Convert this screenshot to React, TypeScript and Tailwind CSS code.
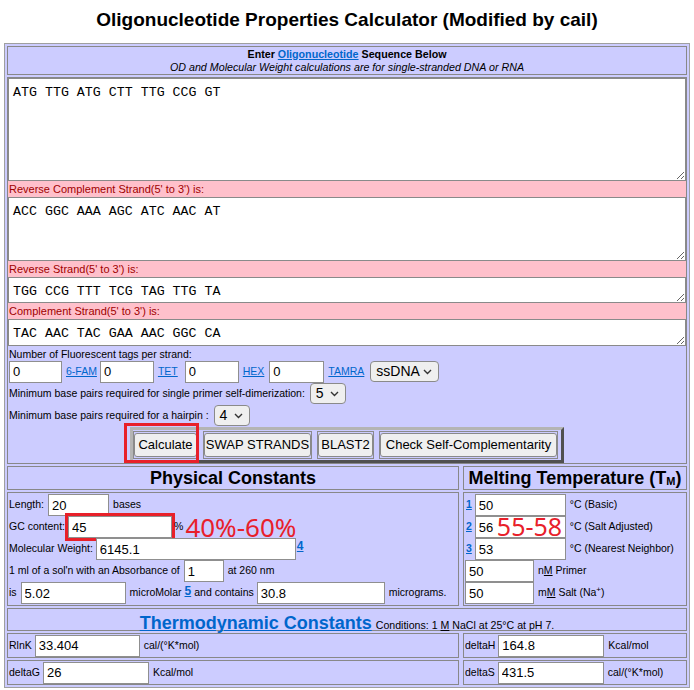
import React from "react"

const inputCls = "h-[22px] shrink-0 border border-[#8f8f8f] bg-white px-[3px] text-[13px] leading-[20px] text-black"
const linkCls = "text-[#0066cc] underline"
const rowCls = "flex h-[22px] items-center whitespace-nowrap"

function Strand({ h, value }: { h: string; value: string }) {
  return (
    <textarea
      className={`${h} w-full border border-[#8a8a8a] bg-white pl-[4px] pt-[5px] font-['Liberation_Mono',monospace] text-[13.3px] leading-[18px] text-black`}
      defaultValue={value}
    />
  )
}

function StrandLabel({ children }: { children: React.ReactNode }) {
  return <div className="h-[16px] bg-[#ffc0cb] pl-[1px] text-[11px] leading-[16px] text-[#a00000]">{children}</div>
}

function Select({ value, w }: { value: string; w: string }) {
  return (
    <div className={`${w} flex h-[21px] items-center justify-between rounded-[4px] border border-[#8a8a8a] bg-[#efefef] pl-[5px] pr-[6px] text-[14px]`}>
      <span>{value}</span>
      <svg width="9" height="6" viewBox="0 0 9 6" fill="none">
        <path d="M1 1l3.5 3.5L8 1" stroke="#333" strokeWidth="1.4" />
      </svg>
    </div>
  )
}

function Btn({ w, children }: { w: string; children: React.ReactNode }) {
  return (
    <div className="border border-[#8a8a8a] py-[1px]">
      <button className={`${w} h-[24px] rounded-[3px] border border-[#8a8a8a] bg-[#efefef] text-center text-[13px] whitespace-nowrap`}>
        {children}
      </button>
    </div>
  )
}

export default function App() {
  return (
    <div className="min-h-screen bg-white font-['Liberation_Sans',Arial,sans-serif] text-[10.5px] text-black">
      <h1 className="flex h-[43px] items-center justify-center pb-[3px] text-[19px] font-bold">
        Oligonucleotide Properties Calculator (Modified by cail)
      </h1>

      <div className="ml-[4px] flex w-[686px] flex-col gap-[2px] border border-[#a0a0a0] bg-[#ccccff] p-[2px]">
        <div className="flex h-[29px] flex-col items-center justify-center border border-[#888] text-[10.7px] leading-[13px]">
          <div className="font-bold">
            Enter <a href="#" className={linkCls}>Oligonucleotide</a> Sequence Below
          </div>
          <div className="italic">OD and Molecular Weight calculations are for single-stranded DNA or RNA</div>
        </div>

        <div className="flex flex-col border border-[#888]">
          <Strand h="h-[103px]" value="ATG TTG ATG CTT TTG CCG GT" />
          <StrandLabel>Reverse Complement Strand(5' to 3') is:</StrandLabel>
          <Strand h="h-[64px]" value="ACC GGC AAA AGC ATC AAC AT" />
          <StrandLabel>Reverse Strand(5' to 3') is:</StrandLabel>
          <Strand h="h-[26px]" value="TGG CCG TTT TCG TAG TTG TA" />
          <StrandLabel>Complement Strand(5' to 3') is:</StrandLabel>
          <Strand h="h-[27px]" value="TAC AAC TAC GAA AAC GGC CA" />

          <div className="pl-[1px] pt-[2px] leading-[13px]">Number of Fluorescent tags per strand:</div>
          <div className="flex h-[21px] items-center pl-[1px]">
            <input className={`${inputCls} h-[21px] w-[53px]`} defaultValue="0" />
            <a href="#" className={`${linkCls} ml-[4px]`}>6-FAM</a>
            <input className={`${inputCls} ml-[3px] h-[21px] w-[54px]`} defaultValue="0" />
            <a href="#" className={`${linkCls} ml-[4px]`}>TET</a>
            <input className={`${inputCls} ml-[7px] h-[21px] w-[54px]`} defaultValue="0" />
            <a href="#" className={`${linkCls} ml-[4px]`}>HEX</a>
            <input className={`${inputCls} ml-[5px] h-[21px] w-[55px]`} defaultValue="0" />
            <a href="#" className={`${linkCls} ml-[4px]`}>TAMRA</a>
            <div className="ml-[6px]">
              <Select value="ssDNA" w="w-[69px]" />
            </div>
          </div>
          <div className="mt-[1px] flex h-[21px] items-center pl-[1px]">
            <span>Minimum base pairs required for single primer self-dimerization:</span>
            <div className="ml-[5px]">
              <Select value="5" w="w-[36px]" />
            </div>
          </div>
          <div className="mt-[1px] flex h-[21px] items-center pl-[1px]">
            <span>Minimum base pairs required for a hairpin :</span>
            <div className="ml-[5px]">
              <Select value="4" w="w-[36px]" />
            </div>
          </div>

          <div className="mt-[1px] flex justify-center">
            <div className="relative">
              <div className="flex h-[36px] items-center gap-[5px] border-[3px] border-b-[#505050] border-l-[#b4b4b4] border-r-[#505050] border-t-[#b4b4b4] py-[1px] pr-[3px]">
                <Btn w="w-[63px]">Calculate</Btn>
                <Btn w="w-[107px]">SWAP STRANDS</Btn>
                <Btn w="w-[55px]">BLAST2</Btn>
                <Btn w="w-[177px]">Check Self-Complementarity</Btn>
              </div>
              <div className="absolute left-[-6px] top-[-4px] h-[40px] w-[75px] border-[3px] border-[#e8202a]" />
            </div>
          </div>
        </div>

        <div className="grid grid-cols-[452px_1fr] gap-x-[4px] gap-y-[2px]">
          <div className="flex h-[24px] items-center justify-center border border-[#888] text-[18px] font-bold">
            Physical Constants
          </div>
          <div className="flex h-[24px] items-center justify-center border border-[#888] text-[18px] font-bold">
            Melting Temperature (T<sub className="text-[11px]">M</sub>)
          </div>

          <div className="flex flex-col border border-[#888] py-[1px] pl-[1px]">
            <div className={rowCls}>
              <span>Length:</span>
              <input className={`${inputCls} ml-[4px] w-[61px]`} defaultValue="20" />
              <span className="ml-[4px]">bases</span>
            </div>
            <div className={rowCls}>
              <span>GC content:</span>
              <input className={`${inputCls} ml-[3px] w-[104px] outline-3 outline-[#e8202a]`} defaultValue="45" />
              <span className="ml-[2px]">%</span>
              <span className="ml-[2px] font-['Noto_Sans',sans-serif] text-[26px] leading-none text-[#e8202a]">40%-60%</span>
            </div>
            <div className={rowCls}>
              <span>Molecular Weight:</span>
              <input className={`${inputCls} ml-[3px] w-[200px]`} defaultValue="6145.1" />
              <a href="#" className={`${linkCls} ml-[1px] mt-[2px] self-start text-[12px] font-bold leading-[13px]`}>4</a>
            </div>
            <div className={rowCls}>
              <span>1 ml of a sol'n with an Absorbance of</span>
              <input className={`${inputCls} ml-[4px] w-[40px]`} defaultValue="1" />
              <span className="ml-[4px]">at 260 nm</span>
            </div>
            <div className={rowCls}>
              <span>is</span>
              <input className={`${inputCls} ml-[4px] w-[105px]`} defaultValue="5.02" />
              <span className="ml-[4px]">microMolar</span>
              <a href="#" className={`${linkCls} ml-[3px] mt-[3px] self-start text-[12px] font-bold leading-[13px]`}>5</a>
              <span className="ml-[3px]">and contains</span>
              <input className={`${inputCls} ml-[3px] w-[128px]`} defaultValue="30.8" />
              <span className="ml-[4px]">micrograms.</span>
            </div>
          </div>

          <div className="flex flex-col border border-[#888] py-[1px] pl-[1px]">
            <div className={rowCls}>
              <a href="#" className={`${linkCls} ml-[1px] font-bold`}>1</a>
              <input className={`${inputCls} ml-[3px] w-[91px]`} defaultValue="50" />
              <span className="ml-[4px]">°C (Basic)</span>
            </div>
            <div className={rowCls}>
              <a href="#" className={`${linkCls} ml-[1px] font-bold`}>2</a>
              <div className="relative ml-[3px]">
                <input className={`${inputCls} w-[91px]`} defaultValue="56" />
                <span className="absolute left-[22px] top-[-2px] font-['Noto_Sans',sans-serif] text-[25px] leading-none text-[#e8202a]">55-58</span>
              </div>
              <span className="ml-[4px]">°C (Salt Adjusted)</span>
            </div>
            <div className={rowCls}>
              <a href="#" className={`${linkCls} ml-[1px] font-bold`}>3</a>
              <input className={`${inputCls} ml-[3px] w-[91px]`} defaultValue="53" />
              <span className="ml-[4px]">°C (Nearest Neighbor)</span>
            </div>
            <div className={rowCls}>
              <input className={`${inputCls} w-[69px]`} defaultValue="50" />
              <span className="ml-[4px]">
                n<span className="underline">M</span> Primer
              </span>
            </div>
            <div className={rowCls}>
              <input className={`${inputCls} w-[69px]`} defaultValue="50" />
              <span className="ml-[4px]">
                m<span className="underline">M</span> Salt (Na<sup className="text-[8px]">+</sup>)
              </span>
            </div>
          </div>
        </div>

        <div className="flex h-[23px] items-baseline justify-center border border-[#888] pt-[1px]">
          <a href="#" className={`${linkCls} text-[18px] font-bold`}>Thermodynamic Constants</a>
          <span className="ml-[4px] text-[10.6px]">
            Conditions: 1 <span className="underline">M</span> NaCl at 25°C at pH 7.
          </span>
        </div>

        <div className="grid grid-cols-[452px_1fr] gap-x-[4px] gap-y-[2px]">
          <div className="flex h-[25px] items-center border border-[#888] pl-[1px]">
            <span>RlnK</span>
            <input className={`${inputCls} ml-[3px] w-[105px]`} defaultValue="33.404" />
            <span className="ml-[4px]">cal/(°K*mol)</span>
          </div>
          <div className="flex h-[25px] items-center border border-[#888] pl-[1px]">
            <span>deltaH</span>
            <input className={`${inputCls} ml-[3px] w-[106px]`} defaultValue="164.8" />
            <span className="ml-[4px]">Kcal/mol</span>
          </div>
          <div className="flex h-[25px] items-center border border-[#888] pl-[1px]">
            <span>deltaG</span>
            <input className={`${inputCls} ml-[3px] w-[106px]`} defaultValue="26" />
            <span className="ml-[4px]">Kcal/mol</span>
          </div>
          <div className="flex h-[25px] items-center border border-[#888] pl-[1px]">
            <span>deltaS</span>
            <input className={`${inputCls} ml-[3px] w-[106px]`} defaultValue="431.5" />
            <span className="ml-[4px]">cal/(°K*mol)</span>
          </div>
        </div>
      </div>
    </div>
  )
}
